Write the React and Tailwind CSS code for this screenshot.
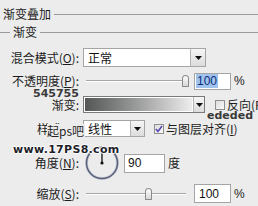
import React from "react";

const CJK = "font-['Noto_Sans_CJK_SC','Noto_Sans',sans-serif]";

function DropArrow({ className = "" }) {
  return (
    <div
      className={`flex shrink-0 items-center justify-center border-l border-[#b5b5b5] bg-gradient-to-b from-[#f6f6f6] to-[#dcdcdc] ${className}`}
    >
      <svg width="7" height="4" viewBox="0 0 7 4">
        <path d="M0 0h7L3.5 4z" fill="#111" />
      </svg>
    </div>
  );
}

function Slider({ thumb }) {
  return (
    <div className="relative h-full w-[100px] shrink-0">
      <div className="absolute left-0 right-0 top-1/2 h-[2px] -translate-y-1/2 border-t border-[#a6a6a6] bg-white" />
      <div
        className="absolute top-1/2 h-[12px] w-[7px] -translate-y-1/2 rounded-t-[4px] rounded-b-[1px] border border-[#8a8a8a] bg-gradient-to-b from-[#fdfdfd] to-[#d8d8d8]"
        style={{ left: thumb }}
      />
    </div>
  );
}

function Label({ children }) {
  return (
    <div className="w-[80px] shrink-0 pr-[1px] text-right text-[12px] leading-[14px] text-[#1c1c1c]">
      {children}
    </div>
  );
}

function Checkbox({ checked }) {
  return (
    <div className="flex h-[10px] w-[10px] shrink-0 items-center justify-center border border-[#8e8f8f] bg-gradient-to-br from-[#dcdcdc] to-[#fafafa]">
      {checked && (
        <svg width="8" height="8" viewBox="0 0 8 8">
          <path d="M1 4l2 2.5L7 1" stroke="#5a48b0" strokeWidth="1.6" fill="none" />
        </svg>
      )}
    </div>
  );
}

export default function App() {
  return (
    <div className={`relative h-[206px] w-[258px] overflow-hidden bg-[#ececec] ${CJK}`}>
      {/* title */}
      <div className="flex items-center pl-[3px] pt-[7px]">
        <span className="text-[12px] leading-[14px] text-[#1c1c1c]">渐变叠加</span>
        <div className="ml-[3px] h-px flex-1 bg-[#9a9a9a]" />
      </div>
      <div className="mt-[4px] flex items-center">
        <div className="h-px w-[10px] bg-[#9a9a9a]" />
        <span className="ml-[3px] text-[12px] leading-[14px] text-[#1c1c1c]">渐变</span>
        <div className="ml-[3px] h-px flex-1 bg-[#9a9a9a]" />
      </div>

      {/* blend mode */}
      <div className="mt-[9px] flex h-[19px] items-center">
        <Label>混合模式(<span className="underline">O</span>):</Label>
        <div className="ml-[3px] flex h-full w-[123px] shrink-0 border border-[#a5a5a5] bg-white">
          <span className="flex-1 pl-[4px] text-[12px] leading-[17px] text-[#111]">正常</span>
          <DropArrow className="w-[15px]" />
        </div>
      </div>

      {/* opacity */}
      <div className="mt-[5px] flex h-[18px] items-center">
        <Label>不透明度(<span className="underline">P</span>):</Label>
        <div className="ml-[6px] h-full">
          <Slider thumb={96} />
        </div>
        <div className="ml-[8px] flex h-[17px] w-[37px] shrink-0 items-center border border-[#a5a5a5] bg-white pl-[1px]">
          <span className="bg-[#9fc3ec] px-[1px] font-['Liberation_Sans',sans-serif] text-[12px] leading-[14px] text-[#0b2c7a]">
            100
          </span>
        </div>
        <span className="ml-[3px] font-['Liberation_Sans',sans-serif] text-[12px] text-[#1c1c1c]">%</span>
      </div>

      {/* gradient */}
      <div className="mt-[6px] flex h-[17px] items-center">
        <Label>渐变:</Label>
        <div className="ml-[3px] flex h-full w-[122px] shrink-0 border border-[#7a7a7a] bg-white">
          <div className="m-[1px] flex-1 bg-gradient-to-r from-[#545755] to-[#ededed]" />
          <DropArrow className="w-[11px]" />
        </div>
        <div className="ml-[10px]">
          <Checkbox />
        </div>
        <span className="ml-[2px] shrink-0 whitespace-nowrap text-[12px] leading-[14px] text-[#1c1c1c]">反向(R)</span>
      </div>

      {/* style */}
      <div className="mt-[7px] flex h-[17px] items-center">
        <Label>样式(<span className="underline">L</span>):</Label>
        <div className="ml-[3px] flex h-full w-[62px] shrink-0 border border-[#a5a5a5] bg-white">
          <span className="flex-1 pl-[4px] text-[12px] leading-[15px] text-[#111]">线性</span>
          <DropArrow className="w-[14px]" />
        </div>
        <div className="ml-[9px]">
          <Checkbox checked />
        </div>
        <span className="ml-[2px] shrink-0 whitespace-nowrap text-[12px] leading-[14px] text-[#1c1c1c]">
          与图层对齐(<span className="underline">I</span>)
        </span>
      </div>

      {/* angle */}
      <div className="mt-[9px] flex h-[34px] items-center">
        <Label>角度(<span className="underline">N</span>):</Label>
        <div className="ml-[5px] h-[34px] w-[34px] shrink-0">
          <svg width="34" height="34" viewBox="0 0 34 34">
            <circle cx="17" cy="17" r="15.5" fill="none" stroke="#c9ccd6" strokeWidth="3" />
            <circle cx="17" cy="17" r="15.5" fill="none" stroke="#59607a" strokeWidth="1.5" />
            <line x1="17" y1="2" x2="17" y2="17" stroke="#111" strokeWidth="1.3" />
            <circle cx="17" cy="17" r="1.6" fill="#111" />
          </svg>
        </div>
        <div className="ml-[5px] flex h-[19px] w-[41px] shrink-0 items-center border border-[#a5a5a5] bg-white pl-[3px] font-['Liberation_Sans',sans-serif] text-[12px] text-[#111]">
          90
        </div>
        <span className="ml-[3px] text-[12px] text-[#1c1c1c]">度</span>
      </div>

      {/* scale */}
      <div className="mt-[4px] flex h-[19px] items-center">
        <Label>缩放(<span className="underline">S</span>):</Label>
        <div className="ml-[6px] h-full">
          <Slider thumb={59} />
        </div>
        <div className="ml-[8px] flex h-[19px] w-[37px] shrink-0 items-center border border-[#a5a5a5] bg-white pl-[4px] font-['Liberation_Sans',sans-serif] text-[12px] text-[#111]">
          100
        </div>
        <span className="ml-[3px] font-['Liberation_Sans',sans-serif] text-[12px] text-[#1c1c1c]">%</span>
      </div>

      {/* overlaid annotations */}
      <span className="absolute left-[33px] top-[88px] font-['DejaVu_Sans',sans-serif] text-[11px] font-bold leading-[12px] text-[#3a3a3a]">
        545755
      </span>
      <span className="absolute left-[207px] top-[110px] font-['DejaVu_Sans',sans-serif] text-[11px] font-bold leading-[12px] text-[#3a3a3a]">
        ededed
      </span>
      <span className="absolute left-[47px] top-[124px] bg-[#ececec] pr-[1px] text-[12px] leading-[14px] text-[#222] [text-shadow:0_0_1px_#fff]">
        起ps吧
      </span>
      <span className="absolute left-[13px] top-[144px] font-['DejaVu_Sans',sans-serif] text-[11px] font-black leading-[12px] tracking-[0.3px] text-[#1e1e2a] [text-shadow:1px_0_0_#fff,-1px_0_0_#fff,0_1px_0_#fff,0_-1px_0_#fff]">
        www.17PS8.com
      </span>
    </div>
  );
}
